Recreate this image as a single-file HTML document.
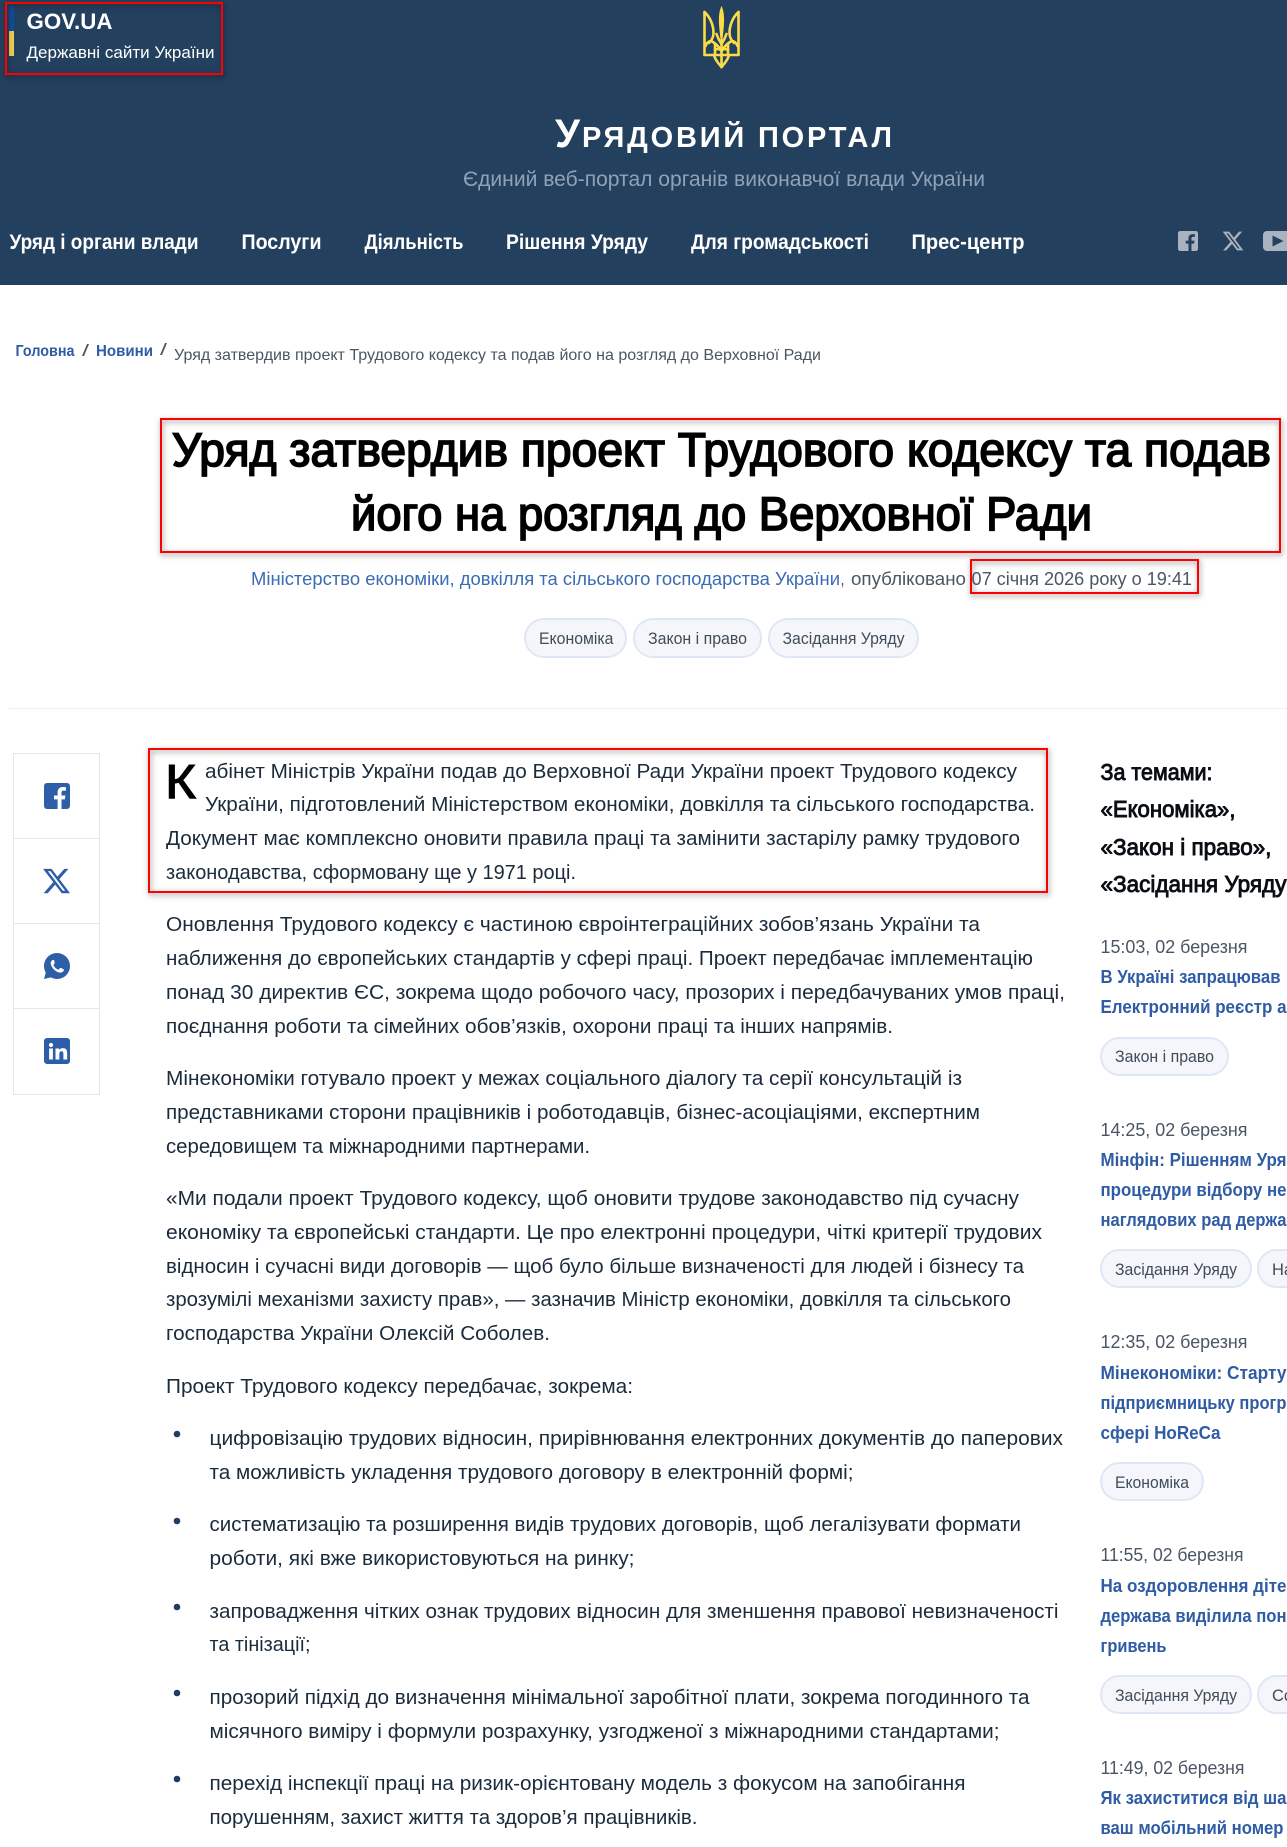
<!DOCTYPE html>
<html lang="uk">
<head>
<meta charset="utf-8">
<title>Урядовий портал</title>
<style>
html,body{margin:0;padding:0;width:1287px;height:1847px;overflow:hidden;background:#fff}
body{position:relative;font-family:"Liberation Sans","Noto Sans CJK JP",sans-serif}
.b{position:absolute;box-sizing:border-box}
.hd{left:0;top:0;width:1287px;height:285px;background:#24405f}
.rb{border:2px solid #f00;filter:drop-shadow(1px 2px 3px rgba(0,0,0,.5))}
.p{background:#f4f6fb;border:2px solid #dfe7f5;border-radius:20px}
.sh{left:13px;top:753px;width:87px;height:342px;border:1px solid #e3e6f0}
.sd{left:14px;width:85px;height:1px;background:#e3e6f0}
svg.t{position:absolute;left:0;top:0;width:1287px;height:1847px;overflow:hidden}
svg text{font-family:"Liberation Sans","Noto Sans CJK JP",sans-serif;white-space:pre}
.m{font-size:20.5px;fill:#1b2b3c}
.nv{font-size:21px;font-weight:700;fill:#fff}
.cr{font-size:18.5px;fill:#4a5663}
.lk{font-size:18.5px;fill:#3a6cb3}
.tg{font-size:16.5px;fill:#414c59}
.tm{font-size:18px;fill:#4a5663}
.st{font-size:18px;font-weight:700;fill:#2f5ca5}
.sh2{font-size:23px;fill:#0a0f14;stroke:#0a0f14;stroke-width:.9px}
.h1{font-size:47px;fill:#000;stroke:#000;stroke-width:1.7px}
.bc{font-size:15.5px;font-weight:700;fill:#2f5ca5}
</style>
</head>
<body>
<div class="b hd"></div>
<div class="b" style="left:9px;top:6px;width:5px;height:25px;background:#0f4da0"></div>
<div class="b" style="left:9px;top:31px;width:5px;height:25px;background:#f0d050"></div>
<div class="b rb" style="left:5px;top:2px;width:218px;height:73px"></div>

<div class="b" style="left:9px;top:708px;width:1278px;height:1px;background:#eceef2"></div>

<div class="b rb" style="left:160px;top:418px;width:1121px;height:135px"></div>
<div class="b rb" style="left:970px;top:559px;width:229px;height:35px"></div>
<div class="b rb" style="left:148px;top:748px;width:900px;height:145px"></div>

<div class="b p" style="left:524px;top:618px;width:103px;height:40px"></div>
<div class="b p" style="left:633px;top:618px;width:129px;height:40px"></div>
<div class="b p" style="left:768px;top:618px;width:151px;height:40px"></div>

<div class="b sh"></div>
<div class="b sd" style="top:838px"></div>
<div class="b sd" style="top:923px"></div>
<div class="b sd" style="top:1008px"></div>

<div class="b p" style="left:1100px;top:1037px;width:129px;height:39px"></div>
<div class="b p" style="left:1100px;top:1249px;width:152px;height:39px"></div>
<div class="b p" style="left:1257px;top:1249px;width:100px;height:39px"></div>
<div class="b p" style="left:1100px;top:1462px;width:104px;height:39px"></div>
<div class="b p" style="left:1100px;top:1675px;width:152px;height:39px"></div>
<div class="b p" style="left:1257px;top:1675px;width:100px;height:39px"></div>

<svg class="t" viewBox="0 0 1287 1847" xmlns="http://www.w3.org/2000/svg">
<!-- header -->
<text x="26.5" y="29" font-size="22" font-weight="700" fill="#fff" textLength="86" lengthAdjust="spacingAndGlyphs">GOV.UA</text>
<text x="26.5" y="58" font-size="16.5" fill="#fff" textLength="188" lengthAdjust="spacingAndGlyphs">Державні сайти України</text>

<g fill="none" stroke="#fbdc47" stroke-width="2.6" stroke-linejoin="round" stroke-linecap="round">
 <g id="tr">
  <path d="M704.5 12V55H721"/>
  <path d="M704.5 12C710 17 713.5 25 713.5 33C713.500 38 711 41 709 43"/>
  <path d="M705.500 46C707 42 710 40 713 42C716 44 719 47 721.500 51"/>
  <path d="M721.500 44C719.500 41 717.500 37 716.500 34"/>
  <path d="M715 44V55"/>
  <path d="M714 55C715 60 719 64 721.500 67"/>
  <path d="M715 50C718 48 720 49 721.500 51"/>
 </g>
 <use href="#tr" transform="translate(1443 0) scale(-1 1)"/>
 <path d="M721.500 45V67"/>
</g>
<path d="M721.500 6C724.500 12 724.500 20 723.500 30C723 36 722 42 721.500 47C721 42 720 36 719.500 30C718.500 20 718.500 12 721.500 6Z" fill="#fbdc47"/>

<text x="555" y="147" font-size="40" font-weight="700" fill="#fff" textLength="25" lengthAdjust="spacingAndGlyphs">У</text>
<text x="582" y="147" font-size="29" font-weight="700" fill="#fff" textLength="310" lengthAdjust="spacing">РЯДОВИЙ ПОРТАЛ</text>
<text x="463" y="186" font-size="21" fill="#8fa2b7" textLength="522" lengthAdjust="spacingAndGlyphs">Єдиний веб-портал органів виконавчої влади України</text>

<text class="nv" x="9.500" y="249" textLength="189" lengthAdjust="spacingAndGlyphs">Уряд і органи влади</text>
<text class="nv" x="241.500" y="249" textLength="80" lengthAdjust="spacingAndGlyphs">Послуги</text>
<text class="nv" x="364.500" y="249" textLength="99" lengthAdjust="spacingAndGlyphs">Діяльність</text>
<text class="nv" x="506" y="249" textLength="142" lengthAdjust="spacingAndGlyphs">Рішення Уряду</text>
<text class="nv" x="691" y="249" textLength="178" lengthAdjust="spacingAndGlyphs">Для громадськості</text>
<text class="nv" x="911.500" y="249" textLength="113" lengthAdjust="spacingAndGlyphs">Прес-центр</text>

<g fill="#a9b3c0">
 <g transform="translate(1178 231) scale(.77)"><path d="M3 0h20a3 3 0 0 1 3 3v20a3 3 0 0 1-3 3h-5.500v-9.600h3.300l.6-3.900h-3.900V9.600c0-1.100.5-2 2.100-2H22V4.300s-1.600-.3-3.200-.3c-3.200 0-5.200 2-5.200 5.400v3.100H10v3.900h3.600V26H3a3 3 0 0 1-3-3V3a3 3 0 0 1 3-3z"/></g>
 <g transform="translate(1221.500 229.500) scale(.96)"><path d="M18.244 2.250h3.308l-7.227 8.260 8.502 11.240H16.170l-5.214-6.817L4.990 21.750H1.680l7.730-8.835L1.254 2.250H8.080l4.713 6.231zm-1.161 17.520h1.833L7.084 4.126H5.117z"/></g>
 <path fill-rule="evenodd" d="M1267 231h21a4 4 0 0 1 4 4v12a4 4 0 0 1-4 4h-21a4 4 0 0 1-4-4v-12a4 4 0 0 1 4-4zM1272.500 235.500v11l11-5.500z"/>
</g>

<!-- breadcrumb -->
<text class="bc" x="15.500" y="356" textLength="59" lengthAdjust="spacingAndGlyphs">Головна</text>
<text x="82" y="356" font-size="17" fill="#4a5663" textLength="7" lengthAdjust="spacingAndGlyphs">/</text>
<text class="bc" x="96" y="356" textLength="57" lengthAdjust="spacingAndGlyphs">Новини</text>
<text x="160" y="355" font-size="17" fill="#4a5663" textLength="7" lengthAdjust="spacingAndGlyphs">/</text>
<text x="174" y="360" font-size="16" fill="#4a5663" textLength="647" lengthAdjust="spacingAndGlyphs">Уряд затвердив проект Трудового кодексу та подав його на розгляд до Верховної Ради</text>

<!-- title -->
<text class="h1" x="172" y="466" textLength="1099" lengthAdjust="spacingAndGlyphs">Уряд затвердив проект Трудового кодексу та подав</text>
<text class="h1" x="351" y="530" textLength="741" lengthAdjust="spacingAndGlyphs">його на розгляд до Верховної Ради</text>

<text class="lk" x="251" y="585" textLength="589" lengthAdjust="spacingAndGlyphs">Міністерство економіки, довкілля та сільського господарства України</text>
<text class="cr" x="840.500" y="585" textLength="4" lengthAdjust="spacingAndGlyphs">,</text>
<text class="cr" x="851" y="585" textLength="115" lengthAdjust="spacingAndGlyphs">опубліковано</text>
<text class="cr" x="971.500" y="585" textLength="220.500" lengthAdjust="spacingAndGlyphs">07 січня 2026 року о 19:41</text>

<text class="tg" x="539" y="644" textLength="74.500" lengthAdjust="spacingAndGlyphs">Економіка</text>
<text class="tg" x="648" y="644" textLength="99" lengthAdjust="spacingAndGlyphs">Закон і право</text>
<text class="tg" x="782.500" y="644" textLength="122" lengthAdjust="spacingAndGlyphs">Засідання Уряду</text>

<!-- share icons -->
<g fill="#2f5ea8">
 <g transform="translate(44 783)"><path d="M3 0h20a3 3 0 0 1 3 3v20a3 3 0 0 1-3 3h-5.500v-9.600h3.300l.6-3.900h-3.900V9.600c0-1.100.5-2 2.100-2H22V4.300s-1.600-.3-3.200-.3c-3.200 0-5.200 2-5.200 5.400v3.100H10v3.900h3.600V26H3a3 3 0 0 1-3-3V3a3 3 0 0 1 3-3z"/></g>
 <g transform="translate(41.500 866) scale(1.250)"><path d="M18.244 2.250h3.308l-7.227 8.260 8.502 11.240H16.170l-5.214-6.817L4.990 21.750H1.680l7.730-8.835L1.254 2.250H8.080l4.713 6.231zm-1.161 17.520h1.833L7.084 4.126H5.117z"/></g>
 <g transform="translate(44 953)"><path fill-rule="evenodd" d="M13 0a13 13 0 0 1 0 26c-2.300 0-4.400-.6-6.300-1.600L0 26l1.800-6.400A13 13 0 0 1 13 0zM9.300 7c-.3-.1-.9 0-1.400.5C7.200 8.200 6.500 9.200 6.800 11c.4 2.100 1.700 4.200 3.700 6 2.100 1.800 4.300 2.700 6.200 2.600 1.300-.1 2.600-1 3-2 .1-.4.2-.9.1-1.100-.2-.3-2.700-1.600-3.100-1.600-.4-.1-.6.1-.8.3l-1 1.200c-.2.2-.4.3-.7.1-1.100-.4-2-1-2.900-1.800-.7-.7-1.300-1.500-1.800-2.500-.1-.3 0-.5.2-.6l.8-1c.2-.2.2-.5.1-.7L10.300 7.600c-.2-.4-.6-.5-1-.6z"/></g>
 <g transform="translate(44 1038)"><path fill-rule="evenodd" d="M3 0h20a3 3 0 0 1 3 3v20a3 3 0 0 1-3 3H3a3 3 0 0 1-3-3V3a3 3 0 0 1 3-3zM7 4.900a2.100 2.100 0 1 0 0 4.200 2.100 2.100 0 0 0 0-4.200zM5.100 10.500v11h3.800v-11zM11.500 10.500v11h3.800V16c0-1.600.6-2.800 2.200-2.800s1.900 1.300 1.900 2.800v5.500h3.800v-6.200c0-3-.9-5.200-4.300-5.200-1.900 0-3.200.9-3.800 1.900v-1.500z"/></g>
</g>

<!-- lead -->
<text x="165" y="798" font-size="48" fill="#000" stroke="#000" stroke-width="1.100" textLength="31" lengthAdjust="spacingAndGlyphs">К</text>
<text class="m" x="205" y="778" textLength="812" lengthAdjust="spacingAndGlyphs">абінет Міністрів України подав до Верховної Ради України проект Трудового кодексу</text>
<text class="m" x="205" y="811" textLength="830" lengthAdjust="spacingAndGlyphs">України, підготовлений Міністерством економіки, довкілля та сільського господарства.</text>
<text class="m" x="166" y="845" textLength="854" lengthAdjust="spacingAndGlyphs">Документ має комплексно оновити правила праці та замінити застарілу рамку трудового</text>
<text class="m" x="166" y="879" textLength="410" lengthAdjust="spacingAndGlyphs">законодавства, сформовану ще у 1971 році.</text>

<!-- p1 -->
<text class="m" x="166" y="931" textLength="814" lengthAdjust="spacingAndGlyphs">Оновлення Трудового кодексу є частиною євроінтеграційних зобов’язань України та</text>
<text class="m" x="166" y="965" textLength="867" lengthAdjust="spacingAndGlyphs">наближення до європейських стандартів у сфері праці. Проект передбачає імплементацію</text>
<text class="m" x="166" y="999" textLength="899" lengthAdjust="spacingAndGlyphs">понад 30 директив ЄС, зокрема щодо робочого часу, прозорих і передбачуваних умов праці,</text>
<text class="m" x="166" y="1033" textLength="727" lengthAdjust="spacingAndGlyphs">поєднання роботи та сімейних обов’язків, охорони праці та інших напрямів.</text>
<!-- p2 -->
<text class="m" x="166" y="1085" textLength="796" lengthAdjust="spacingAndGlyphs">Мінекономіки готувало проект у межах соціального діалогу та серії консультацій із</text>
<text class="m" x="166" y="1119" textLength="814" lengthAdjust="spacingAndGlyphs">представниками сторони працівників і роботодавців, бізнес-асоціаціями, експертним</text>
<text class="m" x="166" y="1153" textLength="424" lengthAdjust="spacingAndGlyphs">середовищем та міжнародними партнерами.</text>
<!-- p3 -->
<text class="m" x="166" y="1205" textLength="853" lengthAdjust="spacingAndGlyphs">«Ми подали проект Трудового кодексу, щоб оновити трудове законодавство під сучасну</text>
<text class="m" x="166" y="1239" textLength="876" lengthAdjust="spacingAndGlyphs">економіку та європейські стандарти. Це про електронні процедури, чіткі критерії трудових</text>
<text class="m" x="166" y="1273" textLength="858" lengthAdjust="spacingAndGlyphs">відносин і сучасні види договорів — щоб було більше визначеності для людей і бізнесу та</text>
<text class="m" x="166" y="1306" textLength="845" lengthAdjust="spacingAndGlyphs">зрозумілі механізми захисту прав», — зазначив Міністр економіки, довкілля та сільського</text>
<text class="m" x="166" y="1340" textLength="384" lengthAdjust="spacingAndGlyphs">господарства України Олексій Соболев.</text>
<!-- p4 -->
<text class="m" x="166" y="1393" textLength="467" lengthAdjust="spacingAndGlyphs">Проект Трудового кодексу передбачає, зокрема:</text>

<!-- list -->
<g fill="#1f3d60">
 <circle cx="177" cy="1434" r="3.300"/><circle cx="177" cy="1521" r="3.300"/><circle cx="177" cy="1607" r="3.300"/><circle cx="177" cy="1693" r="3.300"/><circle cx="177" cy="1779" r="3.300"/>
</g>
<text class="m" x="209.500" y="1445" textLength="853.500" lengthAdjust="spacingAndGlyphs">цифровізацію трудових відносин, прирівнювання електронних документів до паперових</text>
<text class="m" x="209.500" y="1479" textLength="644" lengthAdjust="spacingAndGlyphs">та можливість укладення трудового договору в електронній формі;</text>
<text class="m" x="209.500" y="1531" textLength="811.500" lengthAdjust="spacingAndGlyphs">систематизацію та розширення видів трудових договорів, щоб легалізувати формати</text>
<text class="m" x="209.500" y="1565" textLength="425" lengthAdjust="spacingAndGlyphs">роботи, які вже використовуються на ринку;</text>
<text class="m" x="209.500" y="1618" textLength="849" lengthAdjust="spacingAndGlyphs">запровадження чітких ознак трудових відносин для зменшення правової невизначеності</text>
<text class="m" x="209.500" y="1651" textLength="101" lengthAdjust="spacingAndGlyphs">та тінізації;</text>
<text class="m" x="209.500" y="1704" textLength="820" lengthAdjust="spacingAndGlyphs">прозорий підхід до визначення мінімальної заробітної плати, зокрема погодинного та</text>
<text class="m" x="209.500" y="1738" textLength="790" lengthAdjust="spacingAndGlyphs">місячного виміру і формули розрахунку, узгодженої з міжнародними стандартами;</text>
<text class="m" x="209.500" y="1790" textLength="756" lengthAdjust="spacingAndGlyphs">перехід інспекції праці на ризик-орієнтовану модель з фокусом на запобігання</text>
<text class="m" x="209.500" y="1824" textLength="488" lengthAdjust="spacingAndGlyphs">порушенням, захист життя та здоров’я працівників.</text>

<!-- sidebar -->
<text class="sh2" x="1100.500" y="780" textLength="112" lengthAdjust="spacingAndGlyphs">За темами:</text>
<text class="sh2" x="1100.500" y="817" textLength="135" lengthAdjust="spacingAndGlyphs">«Економіка»,</text>
<text class="sh2" x="1100.500" y="855" textLength="171" lengthAdjust="spacingAndGlyphs">«Закон і право»,</text>
<text class="sh2" x="1100.500" y="892" textLength="186" lengthAdjust="spacingAndGlyphs">«Засідання Уряду</text>

<text class="tm" x="1100.500" y="953" textLength="147" lengthAdjust="spacingAndGlyphs">15:03, 02 березня</text>
<text class="st" x="1100.500" y="983" textLength="180" lengthAdjust="spacingAndGlyphs">В Україні запрацював</text>
<text class="st" x="1100.500" y="1013" textLength="186" lengthAdjust="spacingAndGlyphs">Електронний реєстр а</text>
<text class="tg" x="1115" y="1062" textLength="99" lengthAdjust="spacingAndGlyphs">Закон і право</text>

<text class="tm" x="1100.500" y="1136" textLength="147" lengthAdjust="spacingAndGlyphs">14:25, 02 березня</text>
<text class="st" x="1100.500" y="1166" textLength="186" lengthAdjust="spacingAndGlyphs">Мінфін: Рішенням Уря</text>
<text class="st" x="1100.500" y="1196" textLength="186" lengthAdjust="spacingAndGlyphs">процедури відбору не</text>
<text class="st" x="1100.500" y="1226" textLength="186" lengthAdjust="spacingAndGlyphs">наглядових рад держа</text>
<text class="tg" x="1115" y="1275" textLength="122" lengthAdjust="spacingAndGlyphs">Засідання Уряду</text>
<text class="tg" x="1272" y="1275">На</text>

<text class="tm" x="1100.500" y="1348" textLength="147" lengthAdjust="spacingAndGlyphs">12:35, 02 березня</text>
<text class="st" x="1100.500" y="1379" textLength="186" lengthAdjust="spacingAndGlyphs">Мінекономіки: Старту</text>
<text class="st" x="1100.500" y="1409" textLength="186" lengthAdjust="spacingAndGlyphs">підприємницьку прогр</text>
<text class="st" x="1100.500" y="1439" textLength="120" lengthAdjust="spacingAndGlyphs">сфері HoReCa</text>
<text class="tg" x="1115" y="1488" textLength="74" lengthAdjust="spacingAndGlyphs">Економіка</text>

<text class="tm" x="1100.500" y="1561" textLength="143" lengthAdjust="spacingAndGlyphs">11:55, 02 березня</text>
<text class="st" x="1100.500" y="1592" textLength="186" lengthAdjust="spacingAndGlyphs">На оздоровлення діте</text>
<text class="st" x="1100.500" y="1622" textLength="186" lengthAdjust="spacingAndGlyphs">держава виділила пон</text>
<text class="st" x="1100.500" y="1652" textLength="66" lengthAdjust="spacingAndGlyphs">гривень</text>
<text class="tg" x="1115" y="1701" textLength="122" lengthAdjust="spacingAndGlyphs">Засідання Уряду</text>
<text class="tg" x="1272" y="1701">Со</text>

<text class="tm" x="1100.500" y="1774" textLength="144" lengthAdjust="spacingAndGlyphs">11:49, 02 березня</text>
<text class="st" x="1100.500" y="1804" textLength="186" lengthAdjust="spacingAndGlyphs">Як захиститися від ша</text>
<text class="st" x="1100.500" y="1834" textLength="183" lengthAdjust="spacingAndGlyphs">ваш мобільний номер</text>
</svg>
</body>
</html>
